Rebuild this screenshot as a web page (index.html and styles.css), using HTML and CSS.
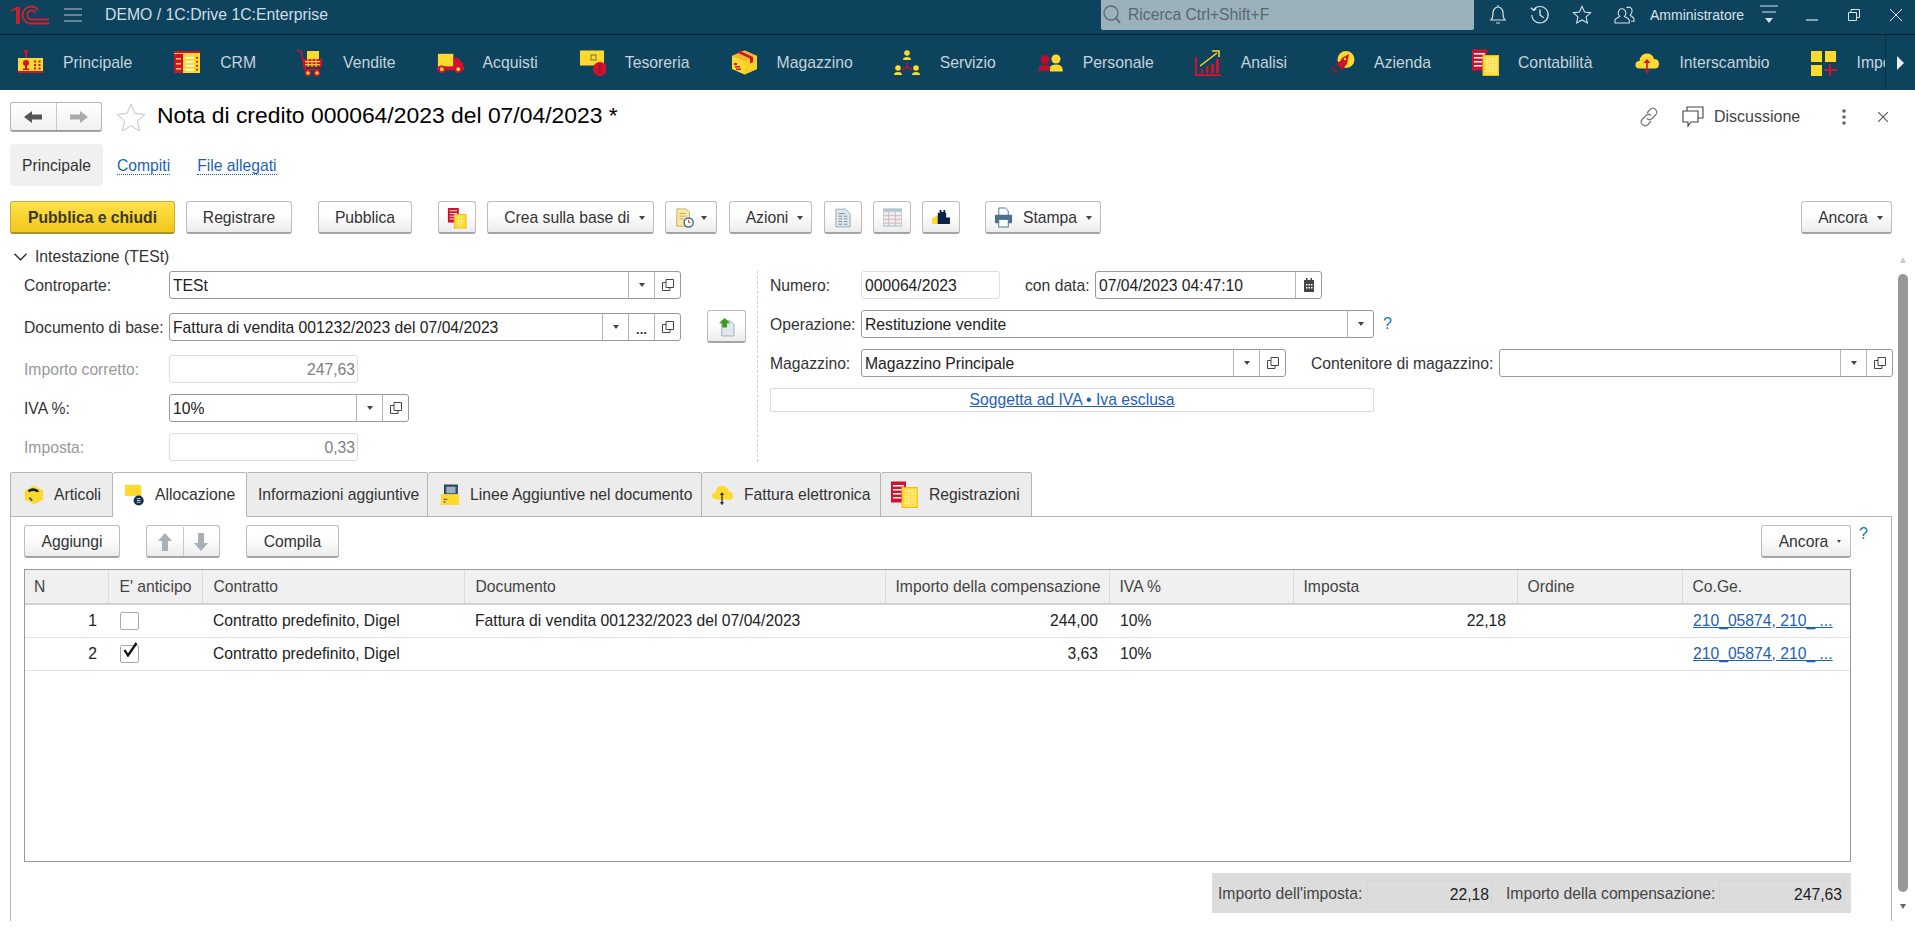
FILE: index.html
```html
<!DOCTYPE html>
<html lang="it">
<head>
<meta charset="utf-8">
<title>Nota di credito</title>
<link rel="stylesheet" href="styles.css">
</head>
<body>
<svg class="sprite" xmlns="http://www.w3.org/2000/svg">
  <symbol id="copy" viewBox="0 0 14 14"><path d="M5 1.500h7.500v8H5zM5 4.500H1.500v8h7.500V9.500" fill="none" stroke="#444" stroke-width="1"/></symbol>
  <symbol id="principale" viewBox="0 0 28 28"><rect x="9" y="1" width="2" height="9" fill="#d0122f"/><circle cx="10" cy="2.500" r="2" fill="#d0122f"/><rect x="2" y="9" width="25" height="15" fill="#ffd92e"/><rect x="2" y="22" width="25" height="2" fill="#d0122f"/><circle cx="10" cy="14" r="3" fill="#d0122f"/><rect x="9" y="16" width="2" height="4" fill="#d0122f"/><rect x="7" y="19.500" width="6" height="1.500" fill="#d0122f"/><path d="M18 11.500h2v2h-2zM22.500 11.500h2v2h-2zM18 15h2v2h-2zM22.500 15h2v2h-2zM18 18.500h2v2h-2zM22.500 18.500h2v2h-2z" fill="#d0122f"/></symbol>
  <symbol id="crm" viewBox="0 0 28 28"><rect x="1" y="2" width="26" height="22" fill="#ffd92e"/><rect x="1" y="2" width="26" height="2" fill="#d0122f"/><rect x="1" y="5" width="9" height="19" fill="#d0122f"/><path d="M3 9h5v1.500H3zM3 14h5v1.500H3zM3 19h5v1.500H3z" fill="#ffd92e"/><path d="M12 8h9v1.500h-9zM12 12h9v1.500h-9zM12 16h9v1.500h-9zM12 20h9v1.500h-9z" fill="#fff"/><path d="M23 8h2v1.500h-2zM23 12h2v1.500h-2zM23 16h2v1.500h-2zM23 20h2v1.500h-2z" fill="#d0122f"/></symbol>
  <symbol id="vendite" viewBox="0 0 28 28"><rect x="11" y="2" width="12" height="8" fill="#ffd92e"/><path d="M1 1l4 1.500 4 18h14" fill="none" stroke="#d0122f" stroke-width="1.600"/><rect x="7" y="10" width="19" height="8" fill="#d0122f"/><path d="M9 12h15v1.200H9zM9 15h15v1.200H9z" fill="#ffd92e"/><path d="M12 10v8M16 10v8M20 10v8" stroke="#ffd92e" stroke-width="1"/><circle cx="12" cy="24" r="2.500" fill="#ffd92e" stroke="#d0122f" stroke-width="1.500"/><circle cx="21" cy="24" r="2.500" fill="#ffd92e" stroke="#d0122f" stroke-width="1.500"/></symbol>
  <symbol id="acquisti" viewBox="0 0 29 28"><rect x="2" y="4.500" width="16" height="14" fill="#ffd92e"/><path d="M18 8.500h5l5 6v7H18z" fill="#d0122f"/><rect x="1" y="17.500" width="28" height="4" fill="#d0122f"/><circle cx="6" cy="20.500" r="3" fill="#ffd92e" stroke="#d0122f" stroke-width="2"/><circle cx="23" cy="20.500" r="3" fill="#ffd92e" stroke="#d0122f" stroke-width="2"/></symbol>
  <symbol id="tesoreria" viewBox="0 0 28 28"><rect x="2" y="1.500" width="24" height="15" fill="#ffd92e"/><rect x="13" y="6" width="5" height="5" fill="none" stroke="#8a8a50" stroke-width="1.300"/><circle cx="22" cy="20" r="7" fill="#d0122f"/><path d="M20 17h4M20 20h4M20 23h4" stroke="#7e0d20" stroke-width="1.200"/></symbol>
  <symbol id="magazzino" viewBox="0 0 28 28"><path d="M14.500 1.500L27 7v13l-12.500 5.500L2 20V7z" fill="#ffd92e"/><path d="M14.500 1.500L27 7l-12.500 5.500L2 7z" fill="#f0b92a"/><path d="M14.500 12.500L27 7v13l-12.500 5.500z" fill="#f7cf2a"/><path d="M7 3.500l13 6v5l3-1.500V8L10 2z" fill="#d0122f"/><path d="M4 14h3v2H4zM5 17h5v1.500H5zM6 19.500h5v1.500H6z" fill="#d0122f"/></symbol>
  <symbol id="servizio" viewBox="0 0 28 28"><circle cx="14" cy="4" r="2.800" fill="#ffd92e"/><path d="M10 11q0-3 4-3t4 3z" fill="#ffd92e"/><circle cx="5" cy="19" r="2.800" fill="#ffd92e"/><path d="M1 26q0-3 4-3t4 3z" fill="#ffd92e"/><circle cx="23" cy="19" r="2.800" fill="#ffd92e"/><path d="M19 26q0-3 4-3t4 3z" fill="#ffd92e"/><path d="M14 13v5M14 18l-5 3M14 18l5 3" stroke="#c01030" stroke-width="1.500" fill="none"/></symbol>
  <symbol id="personale" viewBox="0 0 28 28"><circle cx="9" cy="10.500" r="4.500" fill="#b70f2c"/><path d="M2 22q0-6.500 7-6.500t7 6.500z" fill="#b70f2c"/><circle cx="20" cy="10" r="4.500" fill="#ffd92e"/><path d="M14 22.500h13q0-7-6.500-7T14 19z" fill="#ffd92e"/></symbol>
  <symbol id="analisi" viewBox="0 0 28 28"><path d="M2 8v18h25" fill="none" stroke="#d0122f" stroke-width="2"/><path d="M6 17L23 4" stroke="#ffd92e" stroke-width="1.500"/><path d="M18 2h7v6" fill="none" stroke="#ffd92e" stroke-width="1.500"/><path d="M7 20h2v4H7zM12 17h2.500v7H12zM17 15h3v9h-3zM22 10h3v14h-3z" fill="#d0122f"/></symbol>
  <symbol id="azienda" viewBox="0 0 28 28"><circle cx="19" cy="10.500" r="8.500" fill="#ffd92e"/><path d="M22 5l-2 10-5 5-4-4 4-7z" fill="#d0122f"/><path d="M9 14l5-2-4 6zM17 20l1-4-5 6zM8 20l3 1-6 5zM5 18l3 0-4 4z" fill="#a80e27"/><circle cx="18" cy="10" r="1.200" fill="#ffd92e"/></symbol>
  <symbol id="contabilita" viewBox="0 0 28 28"><rect x="1" y="0.500" width="15" height="21" fill="#d0122f"/><path d="M3 4h11v1.500H3zM3 8h9v1.500H3zM3 12h8v1.500H3zM3 16h8v1.500H3z" fill="#fff"/><rect x="12" y="6.500" width="16" height="20" fill="#ffd92e" stroke="#e6bd20"/><path d="M14 10h12M14 13h12M14 16h12M14 19h12M14 22h12M16 8v18M19 8v18M22 8v18M25 8v18" stroke="#fff3a6" stroke-width=".8"/></symbol>
  <symbol id="scambio" viewBox="0 0 28 28"><path d="M8 19.500q-5 0-4.500-4.500.5-3 4-3 1-7.500 7.500-7.500 5.500 0 7 5.500 5 0 5 5t-5 4.500z" fill="#ffd92e"/><path d="M15 11v13" stroke="#d0122f" stroke-width="1.600"/><path d="M11.500 14l3.500-4 3.500 4zM12.500 21.500l2.500 3 2.500-3z" fill="#d0122f"/></symbol>
  <symbol id="import" viewBox="0 0 28 28"><rect x="1" y="2" width="11" height="11" fill="#ffd92e"/><rect x="15" y="2" width="11" height="11" fill="#ffd92e"/><rect x="1" y="16" width="11" height="11" fill="#ffd92e"/><path d="M20 15v12M14 21h13" stroke="#d0122f" stroke-width="2"/></symbol>
  <symbol id="docs" viewBox="0 0 22 24"><rect x="1" y="1" width="12" height="16" fill="#d0122f"/><path d="M3 4h8M3 7h8M3 10h5M3 13h5" stroke="#fff" stroke-width="1"/><rect x="8" y="8" width="13" height="15" fill="#ffd92e" stroke="#e6bd20"/><path d="M10 12h9M10 15h9M10 18h9M13 9v13M16 9v13" stroke="#fff3a6" stroke-width=".7"/></symbol>
</svg>

<div class="app">
  <header class="top">
    <svg class="logo" viewBox="0 0 38 20"><path d="M0 6l6-3v16M5.500 3h2.500v16" fill="none" stroke="#d4202e" stroke-width="1.800"/><path d="M27 5A8.500 8.500 0 1 0 20.500 18.500H38M24.500 7.500A4.500 4.500 0 1 0 20.500 14.500H38" fill="none" stroke="#d4202e" stroke-width="1.800"/></svg>
    <svg class="burger" viewBox="0 0 18 14"><path d="M0 1h18M0 7h18M0 13h18" stroke="#b5c6d0" stroke-width="1.200"/></svg>
    <span class="app-title">DEMO / 1C:Drive 1C:Enterprise</span>
    <div class="search">
      <svg class="search-ico" viewBox="0 0 18 20"><circle cx="8" cy="8" r="7" fill="none" stroke="#5c6a72" stroke-width="1.300"/><path d="M13 13l4 5" stroke="#5c6a72" stroke-width="2"/></svg>
      <span>Ricerca Ctrl+Shift+F</span>
    </div>
    <div class="top-tools">
      <span class="tool"><svg viewBox="0 0 20 22" width="20" height="22"><path d="M3 16c2-2 2-4 2-7 0-3 2-6 5-6s5 3 5 6c0 3 0 5 2 7zM8 19h4" fill="none" stroke="#d8e2e8" stroke-width="1.200"/><path d="M10 1v2" stroke="#d8e2e8"/></svg></span>
      <span class="tool"><svg viewBox="0 0 22 22" width="20" height="20"><path d="M4 5a9 9 0 1 1-2 6M1 3l3 3 3-2" fill="none" stroke="#d8e2e8" stroke-width="1.300"/><path d="M11 5v6l4 3" fill="none" stroke="#d8e2e8" stroke-width="1.500"/></svg></span>
      <span class="tool"><svg viewBox="0 0 22 22" width="20" height="20"><path d="M11 1.500l2.800 6.300 6.700.7-5 4.600 1.400 6.700-5.900-3.400-5.900 3.400 1.400-6.700-5-4.600 6.700-.7z" fill="none" stroke="#d8e2e8" stroke-width="1.200"/></svg></span>
      <span class="tool"><svg viewBox="0 0 22 20" width="21" height="19"><path d="M1 18v-3c0-2 3-3 5-4-2-2-2-4-1-6s4-3 6-1 2 5 0 7c2 1 5 2 5 4v3z" fill="none" stroke="#d8e2e8" stroke-width="1.100"/><path d="M13 2c3-2 6 0 6 3 0 2-1 3-2 5 2 1 4 2 4 4v2h-3" fill="none" stroke="#d8e2e8" stroke-width="1.100"/></svg></span>
      <span class="user">Amministratore</span>
      <svg class="filter" viewBox="0 0 18 20"><path d="M0 1h18M2 7h14" stroke="#d8e2e8" stroke-width="1.200"/><path d="M5 13h8l-4 5z" fill="#d8e2e8"/></svg>
      <svg class="winbtn win-min" viewBox="0 0 12 12"><path d="M0 11h12" stroke="#d8e2e8" stroke-width="1.200"/></svg>
      <svg class="winbtn win-max" viewBox="0 0 12 12"><path d="M.5 3.500h8v8h-8zM3 3.500V.5h8.500v8H8.500" fill="none" stroke="#d8e2e8"/></svg>
      <svg class="winbtn win-x" viewBox="0 0 12 12"><path d="M0 0l12 12M12 0L0 12" stroke="#d8e2e8" stroke-width="1"/></svg>
    </div>
  </header>

  <nav class="nav">
    <div class="nav-list">
      <a class="nav-item"><svg class="nav-ico"><use href="#principale"/></svg>Principale</a>
      <a class="nav-item"><svg class="nav-ico"><use href="#crm"/></svg>CRM</a>
      <a class="nav-item"><svg class="nav-ico"><use href="#vendite"/></svg>Vendite</a>
      <a class="nav-item"><svg class="nav-ico"><use href="#acquisti"/></svg>Acquisti</a>
      <a class="nav-item"><svg class="nav-ico"><use href="#tesoreria"/></svg>Tesoreria</a>
      <a class="nav-item"><svg class="nav-ico"><use href="#magazzino"/></svg>Magazzino</a>
      <a class="nav-item"><svg class="nav-ico"><use href="#servizio"/></svg>Servizio</a>
      <a class="nav-item"><svg class="nav-ico"><use href="#personale"/></svg>Personale</a>
      <a class="nav-item"><svg class="nav-ico"><use href="#analisi"/></svg>Analisi</a>
      <a class="nav-item"><svg class="nav-ico"><use href="#azienda"/></svg>Azienda</a>
      <a class="nav-item"><svg class="nav-ico"><use href="#contabilita"/></svg>Contabilità</a>
      <a class="nav-item"><svg class="nav-ico"><use href="#scambio"/></svg>Interscambio</a>
      <a class="nav-item"><svg class="nav-ico"><use href="#import"/></svg>Import</a>
    </div>
    <div class="nav-more"><i class="tri-right"></i></div>
  </nav>

  <div class="head">
    <div class="histbtn">
      <span class="hist"><svg viewBox="0 0 18 14" width="18" height="14"><path d="M0 7l8-6v3.500h10v5H8V13z" fill="#555"/></svg></span>
      <span class="hist hist-r"><svg viewBox="0 0 18 14" width="18" height="14"><path d="M18 7l-8-6v3.500H0v5h10V13z" fill="#aaa"/></svg></span>
    </div>
    <svg class="fav" viewBox="0 0 30 28"><path d="M15 1l4 9.500 10 .9-7.600 6.700 2.300 9.900L15 22.800 6.300 28l2.300-9.900L1 11.400l10-.9z" fill="none" stroke="#c4c4c4" stroke-width="1"/></svg>
    <h1 class="title">Nota di credito 000064/2023 del 07/04/2023 *</h1>
    <div class="head-actions">
      <svg class="link-ico" viewBox="0 0 20 20"><path d="M8 6l3-3.500c2-2 4-1.500 5.500 0s2 3.500 0 5.500L13 11.500c-1.500 1.500-3.500 1.500-5 0M12 14l-3 3.500c-2 2-4 1.500-5.500 0s-2-3.500 0-5.500L7 8.500c1.500-1.500 3.500-1.500 5 0" fill="none" stroke="#777" stroke-width="1.200"/></svg>
      <svg class="chat-ico" viewBox="0 0 22 22"><path d="M1 5h15v11H9l-3 4v-4H1zM5 5V1h16v11h-5" fill="none" stroke="#444" stroke-width="1.100"/></svg>
      <span class="disc">Discussione</span>
      <svg class="dots" viewBox="0 0 4 16"><circle cx="2" cy="2" r="1.800" fill="#666"/><circle cx="2" cy="8" r="1.800" fill="#666"/><circle cx="2" cy="14" r="1.800" fill="#666"/></svg>
      <svg class="close" viewBox="0 0 10 10"><path d="M0 0l10 10M10 0L0 10" stroke="#555" stroke-width="1.100"/></svg>
    </div>
  </div>

  <div class="subtabs">
    <span class="subtab-on">Principale</span>
    <a class="subtab subtab-a">Compiti</a>
    <a class="subtab subtab-b">File allegati</a>
  </div>

  <div class="toolbar">
    <button class="btn btn-primary w-165">Pubblica e chiudi</button>
    <button class="btn w-106 ml-11">Registrare</button>
    <button class="btn w-94 ml-26">Pubblica</button>
    <button class="btn w-38 ml-26"><svg class="ico-20"><use href="#docs"/></svg></button>
    <button class="btn btn-menu w-167 ml-11">Crea sulla base di<i class="caret caret-btn"></i></button>
    <button class="btn w-52 ml-11"><svg viewBox="0 0 22 22" width="20" height="20"><path d="M2 1h10l4 4v15H2z" fill="#fbeaa8" stroke="#c2a65a"/><path d="M5 6h7M5 9h8M5 12h5" stroke="#c2a65a"/><circle cx="15" cy="16" r="5" fill="#fff" stroke="#3b6b8a" stroke-width="1.500"/><path d="M15 13v3h2" stroke="#c02030" fill="none"/></svg><i class="caret caret-ico"></i></button>
    <button class="btn btn-menu w-83 ml-12">Azioni<i class="caret caret-btn"></i></button>
    <button class="btn w-38 ml-12"><svg viewBox="0 0 18 22" width="16" height="20"><path d="M1 1h11l5 5v15H1z" fill="#dfe7ec" stroke="#8fa5b4"/><path d="M4 6h7M4 9h4M10 9h4M4 12h4M10 12h4M4 15h4M10 15h4M4 18h4M10 18h4" stroke="#6f8797"/></svg></button>
    <button class="btn w-38 ml-11"><svg viewBox="0 0 20 20" width="19" height="19"><rect x="0" y="1" width="20" height="18" fill="#e8eef2" stroke="#a9bac6"/><rect x="0" y="1" width="20" height="3" fill="#b6c7d3"/><path d="M0 8h20M0 12h20M0 16h20M6 4v15M13 4v15" stroke="#d8a8a8" stroke-width=".8"/></svg></button>
    <button class="btn w-38 ml-11"><svg viewBox="0 0 20 16" width="19" height="15"><path d="M0 15V8h3V6h4v2h1v7z" fill="#ffd92e"/><path d="M6 15V3h2V0h2v2h2V0h2v3h1v5h4v7z" fill="#0b2346"/></svg></button>
    <button class="btn w-116 ml-25"><svg class="print" viewBox="0 0 20 22" width="19" height="21"><path d="M5 1h7l3 3v5H5z" fill="#fff" stroke="#4d6f8d"/><rect x="1" y="8" width="18" height="9" rx="1" fill="#4d6f8d"/><rect x="5" y="13" width="10" height="8" fill="#fff" stroke="#4d6f8d"/></svg>Stampa<i class="caret caret-btn"></i></button>
    <button class="btn btn-menu w-91 push">Ancora<i class="caret caret-btn"></i></button>
  </div>

  <div class="scroll-area">
    <main class="doc">
      <div class="group-head"><svg class="chev" viewBox="0 0 14 8"><path d="M.5 .5L7 7l6.500-6.500" fill="none" stroke="#222" stroke-width="1.300"/></svg>Intestazione (TESt)</div>
      <div class="form">
        <section class="form-l">
          <div class="row r42">
            <label class="lab-l">Controparte:</label>
            <div class="field w-512"><span class="val">TESt</span><span class="cell"><i class="caret"></i></span><span class="cell"><svg class="cp"><use href="#copy"/></svg></span></div>
          </div>
          <div class="row r42">
            <label class="lab-l">Documento di base:</label>
            <div class="field w-512"><span class="val">Fattura di vendita 001232/2023 del 07/04/2023</span><span class="cell"><i class="caret"></i></span><span class="cell cell-dots">...</span><span class="cell"><svg class="cp"><use href="#copy"/></svg></span></div>
            <button class="btn side"><svg viewBox="0 0 20 22" width="19" height="21"><path d="M5 5h9l4 4v12H5z" fill="#dfe7ec" stroke="#9fb2bf"/><path d="M8 2l-6 5.500h3.500V12h5V7.500H14z" fill="#3f9a22"/></svg></button>
          </div>
          <div class="row r39">
            <label class="lab-l lab-off">Importo corretto:</label>
            <div class="field field-off w-189"><span class="val val-r">247,63</span></div>
          </div>
          <div class="row r39">
            <label class="lab-l">IVA %:</label>
            <div class="field w-240"><span class="val">10%</span><span class="cell"><i class="caret"></i></span><span class="cell"><svg class="cp"><use href="#copy"/></svg></span></div>
          </div>
          <div class="row">
            <label class="lab-l lab-off">Imposta:</label>
            <div class="field field-off w-189"><span class="val val-r">0,33</span></div>
          </div>
        </section>
        <section class="form-r">
          <div class="row r39">
            <label class="lab-r">Numero:</label>
            <div class="field field-lite w-139"><span class="val">000064/2023</span></div>
            <label class="lab-date">con data:</label>
            <div class="field w-227"><span class="val">07/04/2023 04:47:10</span><span class="cell"><svg viewBox="0 0 12 14" width="12" height="14"><path d="M1 2h10v12H1z" fill="#444"/><path d="M3 0h1.500v3H3zM7.500 0H9v3H7.500z" fill="#444"/><path d="M3 6h1.500v1.500H3zM5.500 6H7v1.500H5.500zM8 6h1.500v1.500H8zM3 9h1.500v1.500H3zM5.500 9H7v1.500H5.500zM8 9h1.500v1.500H8z" fill="#fff"/></svg></span></div>
          </div>
          <div class="row r39">
            <label class="lab-r">Operazione:</label>
            <div class="field w-513"><span class="val">Restituzione vendite</span><span class="cell"><i class="caret"></i></span></div>
            <a class="hint hint-op">?</a>
          </div>
          <div class="row r39">
            <label class="lab-r">Magazzino:</label>
            <div class="field w-425"><span class="val">Magazzino Principale</span><span class="cell"><i class="caret"></i></span><span class="cell"><svg class="cp"><use href="#copy"/></svg></span></div>
            <label class="lab-cont">Contenitore di magazzino:</label>
            <div class="field w-394"><span class="val"></span><span class="cell"><i class="caret"></i></span><span class="cell"><svg class="cp"><use href="#copy"/></svg></span></div>
          </div>
          <div class="tax-box"><a class="tax-link">Soggetta ad IVA • Iva esclusa</a></div>
        </section>
      </div>

      <div class="tabs">
        <div class="tab t1"><svg viewBox="0 0 24 24" width="22" height="22"><path d="M12 2l10 5v10l-10 5-10-5V7z" fill="#ffd92e"/><path d="M5 7q7-5 13 1l-3 1q-4-3-8 0z" fill="#123"/><path d="M7 15l3 3" stroke="#556" stroke-width="2"/></svg>Articoli</div>
        <div class="tab t2 tab-on"><svg viewBox="0 0 24 24" width="24" height="22"><rect x="1" y="1" width="18" height="12" fill="#ffd92e"/><circle cx="16" cy="18" r="5.500" fill="#12304a"/><path d="M14 16h4M14 18h4M14 20h4" stroke="#fff" stroke-width=".8"/></svg>Allocazione</div>
        <div class="tab t3">Informazioni aggiuntive</div>
        <div class="tab t4"><svg viewBox="0 0 22 24" width="20" height="22"><rect x="5" y="1" width="14" height="11" fill="#33556f" stroke="#1c3346"/><path d="M7 3h10v7H7z" fill="#9fb2bf"/><path d="M1 11h20v12H1z" fill="#ffd92e"/><path d="M4 16h4v1.500H4zM4 19h2v1.500H4z" fill="#666"/></svg>Linee Aggiuntive nel documento</div>
        <div class="tab t5"><svg viewBox="0 0 24 24" width="22" height="22"><path d="M6 17q-5 0-5-5 1-3 4-3 1-7 7-7 6 0 7 6 5 0 5 5t-5 4z" fill="#ffd92e"/><path d="M12 10v12" stroke="#333" stroke-width="1.500"/><path d="M9.500 12l2.500-3 2.500 3zM9.500 20l2.500 3 2.500-3z" fill="#333"/></svg>Fattura elettronica</div>
        <div class="tab t6"><svg class="ico-28"><use href="#contabilita"/></svg>Registrazioni</div>
      </div>
      <div class="panel">
        <div class="panel-bar">
          <button class="btn w-96">Aggiungi</button>
          <div class="btn updown ml-26">
            <span class="ud"><svg viewBox="0 0 14 18" width="14" height="18"><path d="M7 0l7 8h-4v10H4V8H0z" fill="#a9b0b5"/></svg></span>
            <span class="ud ud-r"><svg viewBox="0 0 14 18" width="14" height="18"><path d="M7 18l7-8h-4V0H4v10H0z" fill="#a9b0b5"/></svg></span>
          </div>
          <button class="btn w-93 ml-26">Compila</button>
          <button class="btn btn-menu w-90 push">Ancora<i class="caret caret-small"></i></button>
          <a class="hint hint-bar">?</a>
        </div>
        <div class="table-wrap">
          <table class="grid">
            <colgroup><col class="c1"><col class="c2"><col class="c3"><col class="c4"><col class="c5"><col class="c6"><col class="c7"><col class="c8"><col class="c9"></colgroup>
            <thead>
              <tr><th>N</th><th>E' anticipo</th><th>Contratto</th><th>Documento</th><th>Importo della compensazione</th><th>IVA %</th><th>Imposta</th><th>Ordine</th><th>Co.Ge.</th></tr>
            </thead>
            <tbody>
              <tr><td class="num">1</td><td class="chk"><span class="box"></span></td><td>Contratto predefinito, Digel</td><td>Fattura di vendita 001232/2023 del 07/04/2023</td><td class="num">244,00</td><td>10%</td><td class="num">22,18</td><td></td><td><a class="gl">210_05874, 210_ ...</a></td></tr>
              <tr><td class="num">2</td><td class="chk"><span class="box"><svg class="tick" viewBox="0 0 15 15"><path d="M1.500 8l3.500 5.500L13.500 1" fill="none" stroke="#111" stroke-width="2.300"/></svg></span></td><td>Contratto predefinito, Digel</td><td></td><td class="num">3,63</td><td>10%</td><td></td><td></td><td><a class="gl">210_05874, 210_ ...</a></td></tr>
            </tbody>
          </table>
        </div>
        <div class="totals">
          <span class="tot-lab t-a">Importo dell'imposta:</span><span class="tot-val v-a">22,18</span>
          <span class="tot-lab t-b">Importo della compensazione:</span><span class="tot-val v-b">247,63</span>
        </div>
      </div>
    </main>
    <aside class="vbar">
      <i class="vbar-up"></i>
      <div class="vbar-thumb"></div>
      <i class="vbar-down"></i>
    </aside>
  </div>
</div>
</body>
</html>
```
FILE: styles.css
```css
* { box-sizing: border-box; }
html, body { margin: 0; padding: 0; height: 100%; }
body { font-family: "Liberation Sans", Arial, sans-serif; font-size: 15.7px; color: #333; background: #fff; overflow: hidden; }
.sprite { display: none; }
.app { height: 933px; display: flex; flex-direction: column; overflow: hidden; }

/* top bar */
.top { height: 35px; flex: none; background: #0e435e; border-bottom: 1px solid #05202f; display: flex; align-items: flex-start; color: #cfdde6; }
.logo { width: 38px; height: 20px; margin: 5px 0 0 11px; flex: none; }
.burger { width: 18px; height: 14px; margin: 8px 0 0 15px; flex: none; }
.app-title { font-size: 15.8px; line-height: 30px; margin-left: 23px; }
.search { margin-left: auto; width: 373px; height: 30px; background: #9bb1bc; border-radius: 0 0 2px 2px; display: flex; align-items: center; color: #59686f; font-size: 15.7px; }
.search-ico { width: 18px; height: 20px; margin: 0 7px 0 2px; flex: none; }
.top-tools { width: 441px; flex: none; display: flex; align-items: center; height: 30px; padding-left: 3px; }
.tool { width: 42px; display: flex; justify-content: center; }
.user { font-size: 14px; margin-left: 5px; width: 94px; white-space: nowrap; color: #d8e2e8; }
.filter { width: 18px; height: 20px; margin-left: 16px; }
.winbtn { width: 12px; height: 12px; }
.win-min { margin-left: 28px; }
.win-max { margin-left: 30px; }
.win-x { margin-left: 30px; }

/* nav */
.nav { height: 55px; flex: none; background: #0e435e; display: flex; color: #c4d3dc; font-size: 15.75px; }
.nav-list { width: 1885px; overflow: hidden; display: flex; flex: none; }
.nav-item { display: flex; align-items: center; flex: none; padding: 0 20px; white-space: nowrap; }
.nav-item:first-child { padding: 0 21px 0 16px; }
.nav-ico { width: 28px; height: 28px; margin-right: 19px; flex: none; }
.nav-more { flex: 1; border-left: 1px solid #0a3349; display: flex; align-items: center; justify-content: center; }
.tri-right { border-left: 7px solid #e8eef2; border-top: 7px solid transparent; border-bottom: 7px solid transparent; }

/* document header */
.head { flex: none; display: flex; align-items: center; height: 29px; margin-top: 12px; padding-left: 10px; }
.histbtn { width: 92px; height: 29px; display: flex; border: 1px solid #b5b5b5; border-bottom-color: #999; border-radius: 3px; background: linear-gradient(#fff, #f1f1f1); box-shadow: 0 1px 0 #a8a8a8; }
.hist { width: 46px; display: flex; align-items: center; justify-content: center; }
.hist-r { border-left: 1px solid #c8c8c8; }
.fav { width: 30px; height: 28px; margin-left: 14px; flex: none; }
.title { font-size: 22.9px; font-weight: 400; color: #000; margin: -2px 0 0 11px; white-space: nowrap; }
.head-actions { margin-left: auto; display: flex; align-items: center; width: 276px; flex: none; }
.link-ico { width: 20px; height: 20px; }
.chat-ico { width: 22px; height: 22px; margin-left: 23px; }
.disc { font-size: 16px; margin-left: 10px; color: #444; width: 86px; }
.dots { width: 4px; height: 16px; margin-left: 42px; }
.close { width: 10px; height: 10px; margin-left: 32px; }

.subtabs { flex: none; display: flex; align-items: center; height: 42px; margin-top: 13px; padding-left: 10px; }
.subtab-on { width: 93px; height: 42px; padding-top: 1px; background: #f0f0f0; border-radius: 4px; display: flex; align-items: center; justify-content: center; color: #333; }
.subtab { color: #1f5fb8; border-bottom: 1px dotted #1f5fb8; line-height: 17px; margin-top: 2px; }
.subtab-a { margin-left: 14px; }
.subtab-b { margin-left: 27px; }

/* buttons */
.btn { font: inherit; height: 33px; color: #333; display: inline-flex; align-items: center; justify-content: center; flex: none; padding: 1px 0 0; border: 1px solid #bdbdbd; border-bottom: 2px solid #a5a5a5; border-radius: 3px; background: linear-gradient(#fff 40%, #ececec); }
.btn-menu { padding-left: 8px; }
.btn-primary { font-weight: 700; border-color: #c9ae3a; border-bottom-color: #a89230; background: linear-gradient(#ffe24c, #f3c61a); color: #3a3a2a; }
.w-165 { width: 165px; } .w-106 { width: 106px; } .w-94 { width: 94px; } .w-38 { width: 38px; }
.w-167 { width: 167px; } .w-52 { width: 52px; } .w-83 { width: 83px; } .w-116 { width: 116px; }
.w-91 { width: 91px; } .w-96 { width: 96px; } .w-93 { width: 93px; } .w-90 { width: 90px; }
.ml-11 { margin-left: 11px; } .ml-12 { margin-left: 12px; } .ml-25 { margin-left: 25px; } .ml-26 { margin-left: 26px; }
.push { margin-left: auto; }
.ico-20 { width: 20px; height: 22px; }
.ico-28 { width: 28px; height: 28px; margin-right: 11px; }
.print { margin-right: 10px; }
.caret { display: inline-block; width: 0; height: 0; border-top: 4px solid #444; border-left: 3px solid transparent; border-right: 3px solid transparent; }
.caret-btn { margin-left: 9px; }
.caret-ico { margin-left: 6px; }
.caret-small { margin-left: 9px; border-top-width: 3px; border-left-width: 2.500px; border-right-width: 2.500px; }
.toolbar { flex: none; display: flex; height: 33px; margin-top: 15px; padding: 0 23px 0 10px; }

/* scroll area */
.scroll-area { flex: 1; display: flex; min-height: 0; margin-top: 16px; }
.doc { width: 1893px; flex: none; padding-left: 10px; }
.vbar { flex: 1; display: flex; flex-direction: column; align-items: center; padding: 7px 3px 0 0; height: 673px; }
.vbar-up { border-bottom: 6px solid #ccc; border-left: 3px solid transparent; border-right: 3px solid transparent; }
.vbar-thumb { width: 10px; height: 618px; margin-top: 11px; background: #989898; border-radius: 5px; }
.vbar-down { margin-top: 12px; border-top: 5px solid #666; border-left: 3px solid transparent; border-right: 3px solid transparent; }

.group-head { height: 14px; display: flex; align-items: center; padding-left: 4px; }
.chev { width: 13px; height: 8px; margin-right: 8px; }

.form { display: flex; height: 201px; margin-top: 7px; }
.form-l { width: 747px; flex: none; padding-left: 14px; }
.form-r { flex: 1; border-left: 1px dashed #cfcfcf; padding-left: 12px; height: 191px; }
.row { display: flex; align-items: flex-start; }
.r42 { height: 42px; }
.r39 { height: 39px; }
.lab-l, .lab-r, .lab-date, .lab-cont { line-height: 29px; white-space: nowrap; flex: none; color: #333; }
.lab-l { width: 145px; }
.lab-off { color: #999; }
.lab-r { width: 91px; }
.lab-date { margin-left: 25px; width: 70px; }
.lab-cont { margin-left: 25px; width: 188px; }
.field { height: 28px; display: flex; flex: none; border: 1px solid #9a9a9a; border-radius: 3px; background: #fff; align-items: stretch; }
.field-off { border-color: #dcdcdc; color: #808080; }
.field-lite { border-color: #dcdcdc; }
.val { flex: 1; line-height: 27px; padding: 0 2px 0 3px; white-space: nowrap; overflow: hidden; color: #222; }
.field-off .val { color: #808080; }
.val-r { text-align: right; }
.cell { width: 26px; flex: none; border-left: 1px solid #b5b5b5; display: flex; align-items: center; justify-content: center; }
.cell-dots { align-items: flex-end; line-height: 20px; font-weight: 700; font-size: 13px; color: #333; }
.cp { width: 14px; height: 14px; }
.w-512 { width: 512px; } .w-189 { width: 189px; } .w-240 { width: 240px; } .w-139 { width: 139px; }
.w-227 { width: 227px; } .w-513 { width: 513px; } .w-425 { width: 425px; } .w-394 { width: 394px; }
.side { width: 39px; margin-left: 26px; margin-top: -3px; }
.hint { color: #1a73b8; font-size: 16px; }
.hint-op { margin-left: 9px; line-height: 28px; }
.hint-bar { line-height: 18px; margin: 0 -8px 0 8px; width: 0; }
.tax-box { width: 604px; height: 24px; border: 1px solid #dcdcdc; display: flex; align-items: center; justify-content: center; }
.tax-link { color: #1f5fb8; text-decoration: underline; }

/* tabs */
.tabs { display: flex; height: 45px; }
.tab { display: flex; align-items: center; justify-content: flex-start; background: #ececec; border: 1px solid #b5b5b5; border-left: 0; border-radius: 2px 2px 0 0; white-space: nowrap; color: #333; flex: none; }
.tab:first-child { border-left: 1px solid #b5b5b5; }
.tab svg { flex: none; }
.t1 { width: 103px; padding-left: 12px; } .t1 svg { margin-right: 9px; }
.t2 { width: 134px; padding-left: 10px; } .t2 svg { margin-right: 8px; }
.t3 { width: 181px; padding-left: 11px; }
.t4 { width: 274px; padding-left: 12px; } .t4 svg { margin-right: 10px; }
.t5 { width: 179px; padding-left: 9px; } .t5 svg { margin-right: 11px; }
.t6 { width: 151px; padding-left: 9px; }
.tab-on { background: #fff; border-bottom-color: #fff; position: relative; z-index: 1; }

.panel { width: 1882px; height: 405px; margin-top: -1px; border: 1px solid #b5b5b5; border-bottom: 0; padding: 8px 40px 0 13px; }
.panel-bar { display: flex; height: 33px; }
.updown { width: 74px; }
.ud { width: 37px; height: 100%; display: flex; align-items: center; justify-content: center; }
.ud-r { border-left: 1px solid #c8c8c8; }
.table-wrap { height: 293px; margin-top: 11px; border: 1px solid #9a9a9a; }
.grid { width: 1825px; border-collapse: collapse; table-layout: fixed; }
.c1 { width: 83px; } .c2 { width: 94px; } .c3 { width: 262px; } .c4 { width: 421px; } .c5 { width: 224px; }
.c6 { width: 184px; } .c7 { width: 224px; } .c8 { width: 165px; } .c9 { width: 168px; }
.grid th { height: 34px; background: #f0f0f0; font-weight: 400; text-align: left; padding: 0 0 0 11px; border-bottom: 2px solid #d0d0d0; border-left: 1px solid #dcdcdc; color: #444; white-space: nowrap; overflow: hidden; }
.grid th:first-child { border-left: 0; padding-left: 9px; }
.grid th:nth-child(n+5) { padding-left: 10px; }
.grid td { height: 33px; padding: 0 11px; border-bottom: 1px solid #e2e2e2; white-space: nowrap; overflow: hidden; color: #222; }
.grid .num { text-align: right; }
.grid .chk { padding-left: 12px; overflow: visible; }
.box { display: block; width: 19px; height: 18px; border: 1px solid #aaa; border-radius: 2px; position: relative; background: #fff; }
.tick { width: 15px; height: 15px; position: absolute; left: 2px; top: -4px; }
.gl { color: #1f5fb8; text-decoration: underline; }
.totals { display: flex; align-items: center; height: 40px; margin-top: 11px; margin-left: 1188px; width: 639px; background: #dcdcdc; }
.tot-lab { white-space: nowrap; flex: none; color: #444; line-height: 27px; }
.t-a { margin-left: 6px; width: 149px; }
.t-b { margin-left: 14px; width: 213px; }
.tot-val { height: 27px; line-height: 27px; width: 125px; text-align: right; padding-right: 2px; border: 1px solid #d6d6d6; border-radius: 2px; color: #222; flex: none; }
.v-b { width: 126px; }
```
